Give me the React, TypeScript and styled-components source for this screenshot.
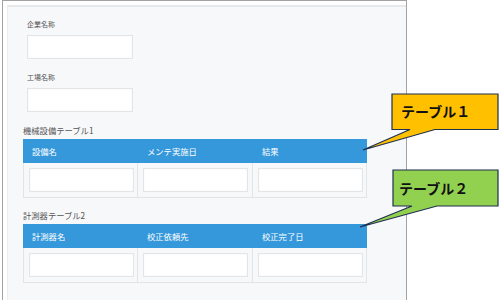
import { FC } from "react";
import styled, { createGlobalStyle } from "styled-components";

const FONT = `"Noto Sans CJK JP", "Noto Sans", sans-serif`;

const GlobalStyle = createGlobalStyle`
body {
    margin: 0;
    background: #ffffff;
    font-family: ${FONT};
}
`

const Page = styled.div`
position: relative;
width: 503px;
height: 300px;
overflow: hidden;
`

const Frame = styled.div`
margin-left: 2px;
width: 399px;
height: 297px;
border: 1px solid #a3a3a3;
padding: 4px 0 0 4px;
box-sizing: content-box;
display: flex;
`

const Panel = styled.div`
flex: 1;
background-color: #f7f8fa;
border-top: 2px solid #e7e8ea;
border-left: 1px solid #eceef0;
padding: 10px 0 0 15px;
display: flex;
flex-direction: column;
`

const Field = styled.div`
padding-left: 4px;
margin-bottom: 11px;
`

const FieldLabel = styled.div`
font-size: 7px;
line-height: 14px;
color: #555;
margin-bottom: 4px;
`

const TextBox = styled.div<{ $width?: number }>`
width: ${(p) => p.$width ?? 106}px;
height: 24px;
box-sizing: border-box;
background: #fff;
border: 1px solid #e4e5e7;
box-shadow: inset 0 0 2px rgba(0, 0, 0, 0.06);
`

const TableTitle = styled.div`
font-size: 8.3px;
line-height: 14px;
color: #555;
margin-bottom: 2px;
`

const TableBlock = styled.div`
margin-bottom: 10px;
`

const Grid = styled.div`
width: 344px;
display: grid;
grid-template-columns: 115px 115px 114px;
`

const HeadCell = styled.div`
height: 24px;
background-color: #3598db;
color: #fff;
font-size: 8.3px;
display: flex;
align-items: center;
padding-left: 9px;
`

const BodyCell = styled.div<{ $first?: boolean }>`
height: 35px;
box-sizing: border-box;
padding: 5px 4px 0 5px;
border-right: 1px solid #e3e4e6;
border-bottom: 1px solid #e3e4e6;
border-left: ${(p) => (p.$first ? "1px solid #e3e4e6" : "none")};
`

/* callouts lie over the page, so they are placed by coordinates */
const Callout = styled.div<{ $x: number; $y: number }>`
position: absolute;
left: ${(p) => p.$x}px;
top: ${(p) => p.$y}px;
width: 140px;
height: 60px;
`

const CalloutSvg = styled.svg`
position: absolute;
left: 0;
top: 0;
`

const CalloutText = styled.div<{ $padTop: number }>`
position: relative;
padding: ${(p) => p.$padTop}px 0 0 42px;
font-family: ${FONT};
font-weight: bold;
font-size: 14px;
line-height: 18px;
color: #111;
`

interface TableProps {
    title: string;
    headers: string[];
}

const InputTable: FC<TableProps> = ({ title, headers }) => (
    <TableBlock>
        <TableTitle>{title}</TableTitle>
        <Grid>
            {headers.map((h) => (
                <HeadCell key={h}>{h}</HeadCell>
            ))}
            {headers.map((h, i) => (
                <BodyCell key={h} $first={i === 0}>
                    <TextBox $width={105} />
                </BodyCell>
            ))}
        </Grid>
    </TableBlock>
);

interface ShapeProps {
    fill: string;
    tip: [number, number];
    box: [number, number, number, number];
    base: [number, number];
}

// box with a wedge tail, in callout-local coords
const CalloutShape: FC<ShapeProps> = ({ fill, tip, box, base }) => {
    const [x1, y1, x2, y2] = box;
    const pts = `${x1},${y1} ${x2},${y1} ${x2},${y2} ${base[1]},${y2} ${tip[0]},${tip[1]} ${base[0]},${y2} ${x1},${y2}`;
    return (
        <CalloutSvg width="142" height="60">
            <polygon points={pts} fill={fill} stroke="#1f2f4f" strokeWidth="1.2" />
        </CalloutSvg>
    );
};

const App: FC = () => {
    return (
        <Page>
            <GlobalStyle />
            <Frame>
                <Panel>
                    <Field>
                        <FieldLabel>企業名称</FieldLabel>
                        <TextBox />
                    </Field>
                    <Field>
                        <FieldLabel>工場名称</FieldLabel>
                        <TextBox />
                    </Field>
                    <InputTable title="機械設備テーブル1" headers={["設備名", "メンテ実施日", "結果"]} />
                    <InputTable title="計測器テーブル2" headers={["計測器名", "校正依頼先", "校正完了日"]} />
                </Panel>
            </Frame>

            <Callout $x={359} $y={92}>
                <CalloutShape fill="#ffc000" box={[33, 2, 139, 37.5]} base={[51, 76]} tip={[4, 58]} />
                <CalloutText $padTop={10}>テーブル１</CalloutText>
            </Callout>
            <Callout $x={357} $y={168}>
                <CalloutShape fill="#92d050" box={[36, 2, 141, 38]} base={[55, 80]} tip={[3, 59]} />
                <CalloutText $padTop={11}>テーブル２</CalloutText>
            </Callout>
        </Page>
    );
};

export default App;
